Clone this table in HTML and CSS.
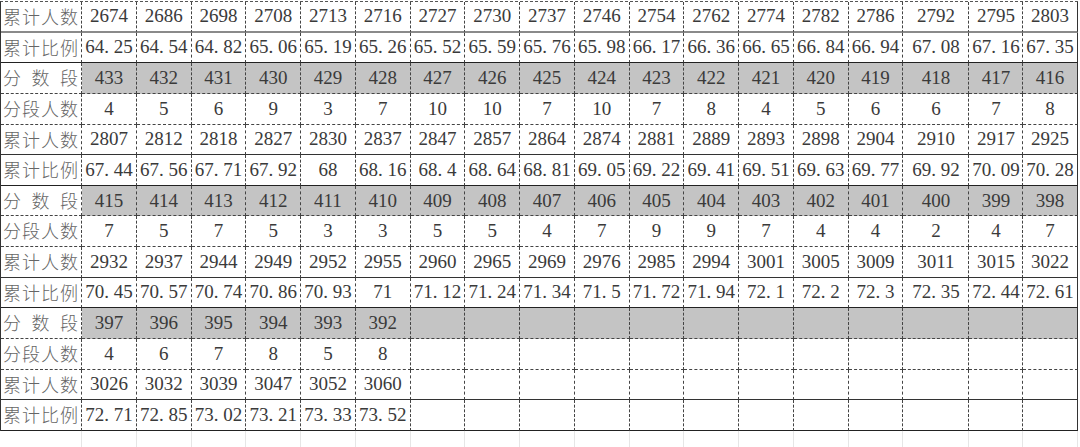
FILE: index.html
```html
<!DOCTYPE html>
<html lang="zh-CN">
<head>
<meta charset="utf-8">
<title>分数段统计表</title>
<link rel="stylesheet" href="styles.css">
</head>
<body>
<div class="sheet">
  <div class="row cum first"><span class="lab">累计人数</span><span>2674</span><span>2686</span><span>2698</span><span>2708</span><span>2713</span><span>2716</span><span>2727</span><span>2730</span><span>2737</span><span>2746</span><span>2754</span><span>2762</span><span>2774</span><span>2782</span><span>2786</span><span>2792</span><span>2795</span><span>2803</span></div>
  <div class="row ratio"><span class="lab">累计比例</span><span>64<i>.</i>25</span><span>64<i>.</i>54</span><span>64<i>.</i>82</span><span>65<i>.</i>06</span><span>65<i>.</i>19</span><span>65<i>.</i>26</span><span>65<i>.</i>52</span><span>65<i>.</i>59</span><span>65<i>.</i>76</span><span>65<i>.</i>98</span><span>66<i>.</i>17</span><span>66<i>.</i>36</span><span>66<i>.</i>65</span><span>66<i>.</i>84</span><span>66<i>.</i>94</span><span>67<i>.</i>08</span><span>67<i>.</i>16</span><span>67<i>.</i>35</span></div>
  <div class="row score"><span class="lab">分 数 段</span><span>433</span><span>432</span><span>431</span><span>430</span><span>429</span><span>428</span><span>427</span><span>426</span><span>425</span><span>424</span><span>423</span><span>422</span><span>421</span><span>420</span><span>419</span><span>418</span><span>417</span><span>416</span></div>
  <div class="row count"><span class="lab">分段人数</span><span>4</span><span>5</span><span>6</span><span>9</span><span>3</span><span>7</span><span>10</span><span>10</span><span>7</span><span>10</span><span>7</span><span>8</span><span>4</span><span>5</span><span>6</span><span>6</span><span>7</span><span>8</span></div>
  <div class="row cum"><span class="lab">累计人数</span><span>2807</span><span>2812</span><span>2818</span><span>2827</span><span>2830</span><span>2837</span><span>2847</span><span>2857</span><span>2864</span><span>2874</span><span>2881</span><span>2889</span><span>2893</span><span>2898</span><span>2904</span><span>2910</span><span>2917</span><span>2925</span></div>
  <div class="row ratio"><span class="lab">累计比例</span><span>67<i>.</i>44</span><span>67<i>.</i>56</span><span>67<i>.</i>71</span><span>67<i>.</i>92</span><span>68</span><span>68<i>.</i>16</span><span>68<i>.</i>4</span><span>68<i>.</i>64</span><span>68<i>.</i>81</span><span>69<i>.</i>05</span><span>69<i>.</i>22</span><span>69<i>.</i>41</span><span>69<i>.</i>51</span><span>69<i>.</i>63</span><span>69<i>.</i>77</span><span>69<i>.</i>92</span><span>70<i>.</i>09</span><span>70<i>.</i>28</span></div>
  <div class="row score"><span class="lab">分 数 段</span><span>415</span><span>414</span><span>413</span><span>412</span><span>411</span><span>410</span><span>409</span><span>408</span><span>407</span><span>406</span><span>405</span><span>404</span><span>403</span><span>402</span><span>401</span><span>400</span><span>399</span><span>398</span></div>
  <div class="row count"><span class="lab">分段人数</span><span>7</span><span>5</span><span>7</span><span>5</span><span>3</span><span>3</span><span>5</span><span>5</span><span>4</span><span>7</span><span>9</span><span>9</span><span>7</span><span>4</span><span>4</span><span>2</span><span>4</span><span>7</span></div>
  <div class="row cum"><span class="lab">累计人数</span><span>2932</span><span>2937</span><span>2944</span><span>2949</span><span>2952</span><span>2955</span><span>2960</span><span>2965</span><span>2969</span><span>2976</span><span>2985</span><span>2994</span><span>3001</span><span>3005</span><span>3009</span><span>3011</span><span>3015</span><span>3022</span></div>
  <div class="row ratio"><span class="lab">累计比例</span><span>70<i>.</i>45</span><span>70<i>.</i>57</span><span>70<i>.</i>74</span><span>70<i>.</i>86</span><span>70<i>.</i>93</span><span>71</span><span>71<i>.</i>12</span><span>71<i>.</i>24</span><span>71<i>.</i>34</span><span>71<i>.</i>5</span><span>71<i>.</i>72</span><span>71<i>.</i>94</span><span>72<i>.</i>1</span><span>72<i>.</i>2</span><span>72<i>.</i>3</span><span>72<i>.</i>35</span><span>72<i>.</i>44</span><span>72<i>.</i>61</span></div>
  <div class="row score"><span class="lab">分 数 段</span><span>397</span><span>396</span><span>395</span><span>394</span><span>393</span><span>392</span><span></span><span></span><span></span><span></span><span></span><span></span><span></span><span></span><span></span><span></span><span></span><span></span></div>
  <div class="row count"><span class="lab">分段人数</span><span>4</span><span>6</span><span>7</span><span>8</span><span>5</span><span>8</span><span></span><span></span><span></span><span></span><span></span><span></span><span></span><span></span><span></span><span></span><span></span><span></span></div>
  <div class="row cum"><span class="lab">累计人数</span><span>3026</span><span>3032</span><span>3039</span><span>3047</span><span>3052</span><span>3060</span><span></span><span></span><span></span><span></span><span></span><span></span><span></span><span></span><span></span><span></span><span></span><span></span></div>
  <div class="row ratio"><span class="lab">累计比例</span><span>72<i>.</i>71</span><span>72<i>.</i>85</span><span>73<i>.</i>02</span><span>73<i>.</i>21</span><span>73<i>.</i>33</span><span>73<i>.</i>52</span><span></span><span></span><span></span><span></span><span></span><span></span><span></span><span></span><span></span><span></span><span></span><span></span></div>
</div>
<div class="tail">
  <span></span><span></span><span></span><span></span><span></span><span></span><span></span><span></span><span></span><span></span><span></span><span></span><span></span><span></span><span></span><span></span><span></span><span></span><span></span>
</div>
</body>
</html>
```

FILE: styles.css
```css
html, body {
  margin: 0;
  padding: 0;
  background: #fff;
}

.sheet,
.tail {
  display: grid;
  grid-template-columns: 81px repeat(15, 54.77px) 65.8px 54.2px 54.2px;
  width: max-content;
}

.sheet {
  grid-auto-rows: 30.64px;
  margin-top: 1px;
  border-top: 1px dashed #555;
  border-left: 1px solid #333;
  font-family: "Liberation Serif", "Times New Roman", serif;
  font-size: 19px;
  color: #3a3a3a;
}

.row {
  display: contents;
}

.row > span {
  box-sizing: border-box;
  display: flex;
  align-items: center;
  justify-content: center;
  white-space: nowrap;
  border-right: 1px dashed #444;
  border-bottom: 1px dashed #444;
}

.row > span:last-child {
  border-right: 1px solid #333;
}

.row i {
  font-style: normal;
  display: inline-block;
  width: 0.5em;
  text-align: left;
}

.row.cum > span {
  border-bottom: 1px solid #333;
}

.row.cum.first > span {
  border-bottom: 2px solid #8a8a8a;
}

.row.ratio > span {
  border-bottom: 1px solid #222;
}

.row.score > span {
  background: #c4c4c4;
}

.row > span.lab {
  display: block;
  background: #fff;
  padding: 0 3px 0 2px;
  font-family: "Noto Sans CJK SC", sans-serif;
  font-size: 18px;
  font-weight: 300;
  line-height: 29px;
  color: #666;
  text-align: justify;
  text-align-last: justify;
}

.tail {
  height: 16px;
  padding-left: 1px;
}

.tail > span {
  border-right: 1px solid #e6e6e6;
}
```
